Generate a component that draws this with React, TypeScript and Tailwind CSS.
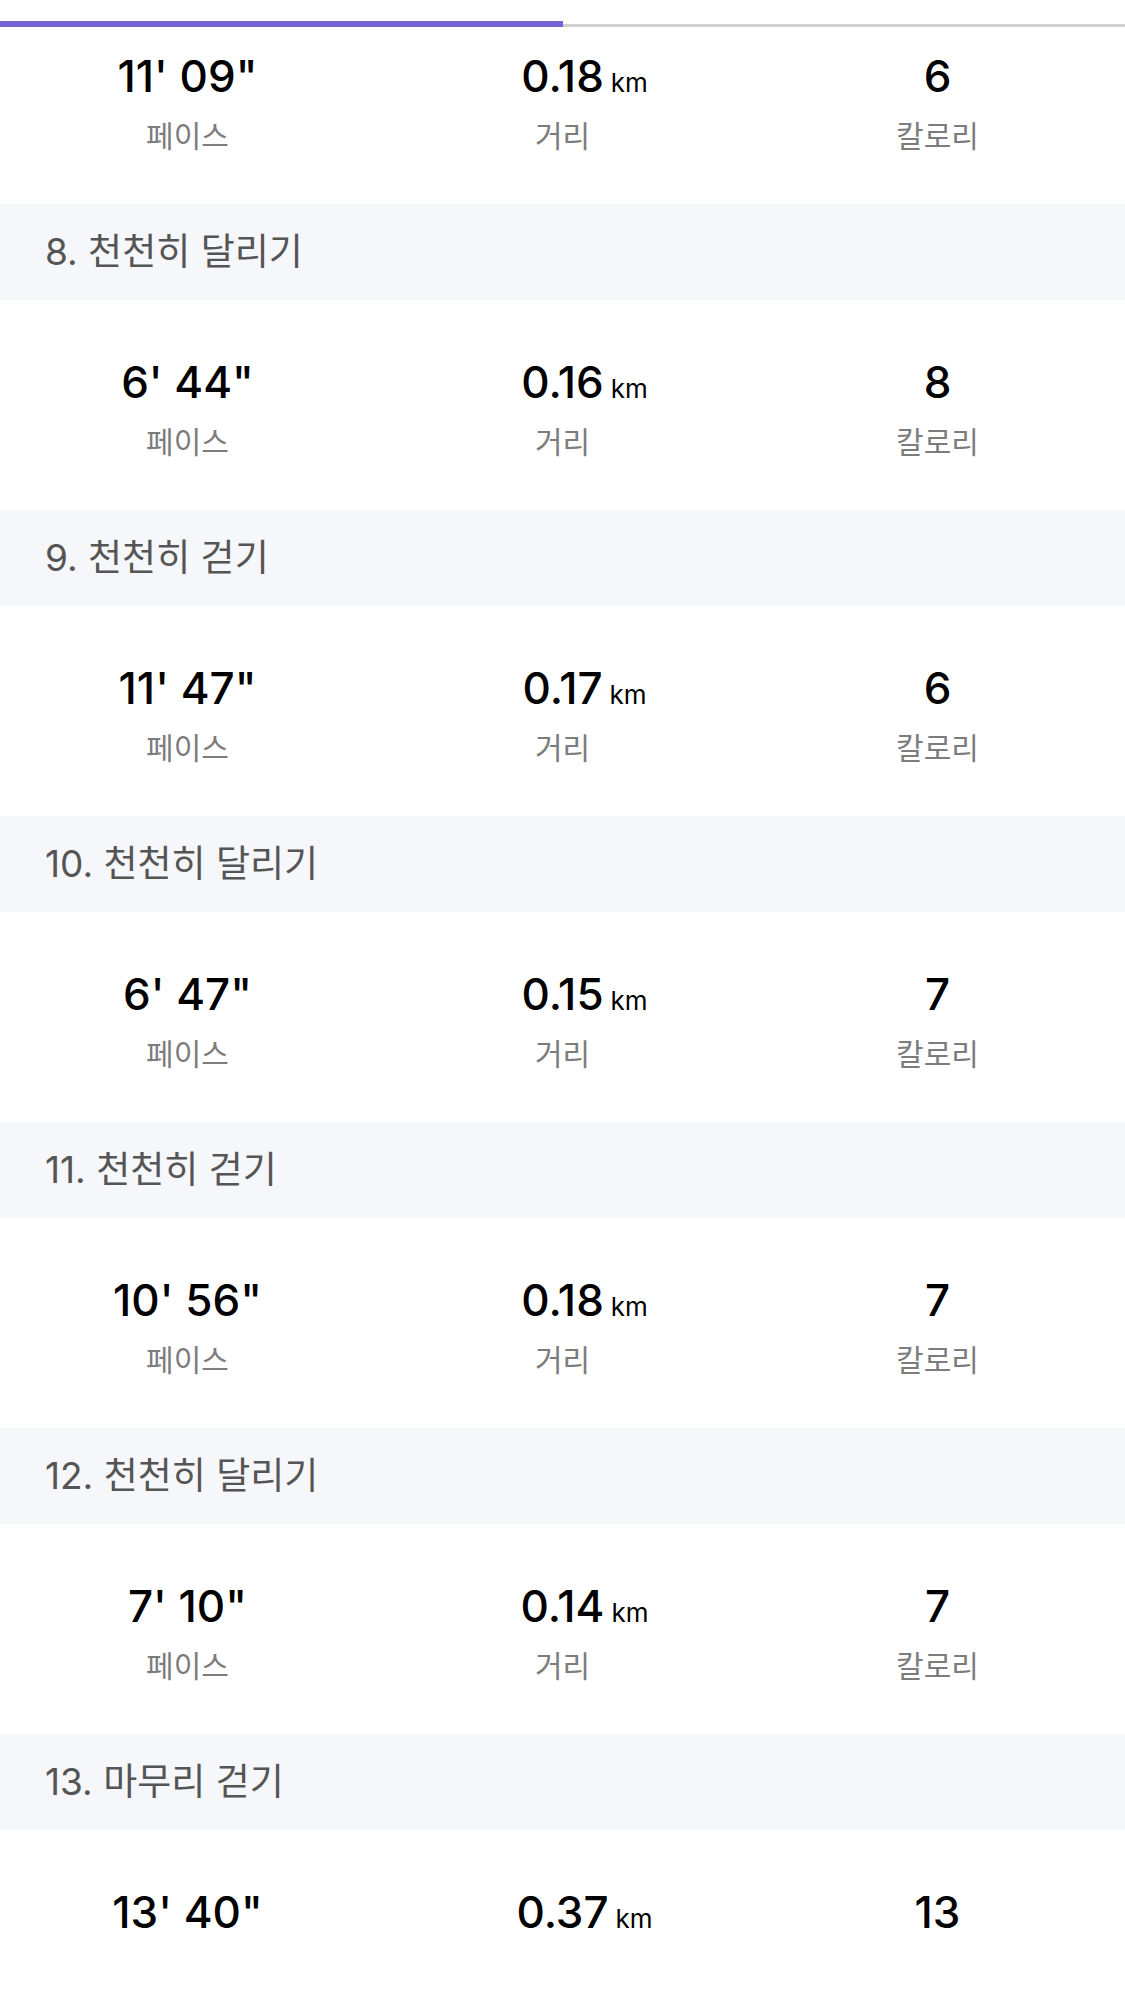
const sections = [
  { title: '8. 천천히 달리기', pace: `6' 44"`, dist: '0.16', cal: '8' },
  { title: '9. 천천히 걷기', pace: `11' 47"`, dist: '0.17', cal: '6' },
  { title: '10. 천천히 달리기', pace: `6' 47"`, dist: '0.15', cal: '7' },
  { title: '11. 천천히 걷기', pace: `10' 56"`, dist: '0.18', cal: '7' },
  { title: '12. 천천히 달리기', pace: `7' 10"`, dist: '0.14', cal: '7' },
  { title: '13. 마무리 걷기', pace: `13' 40"`, dist: '0.37', cal: '13', noLabels: true },
];

const fontStack = "font-['Inter','Noto_Sans_CJK_KR',sans-serif]";

const Stat = ({ value, unit, label }: { value: string; unit?: string; label?: string }) => (
  <div className="flex flex-col items-center">
    <div className="grid grid-cols-[1fr_auto_1fr] items-baseline w-full h-[53px]">
      <span />
      <span className="text-[44px] leading-[53px] font-medium text-black">{value}</span>
      <span className="text-[26px] leading-none text-black ml-[7px]">{unit}</span>
    </div>
    {label && <span className="mt-[15px] text-[30px] leading-[36px] text-[#7c7c7c]">{label}</span>}
  </div>
);

const StatsRow = ({ pace, dist, cal, noLabels, className }: { pace: string; dist: string; cal: string; noLabels?: boolean; className: string }) => (
  <div className={`grid grid-cols-3 bg-white ${className}`}>
    <Stat value={pace} label={noLabels ? undefined : '페이스'} />
    <Stat value={dist} unit="km" label={noLabels ? undefined : '거리'} />
    <Stat value={cal} label={noLabels ? undefined : '칼로리'} />
  </div>
);

export default function App() {
  return (
    <div className={`w-[1125px] h-[2004px] overflow-hidden bg-white ${fontStack}`}>
      <div className="h-[27px] flex items-end">
        <div className="w-1/2 h-[6px] bg-[#7464d4]" />
        <div className="flex-1 h-[3px] bg-[#d0d0d0]" />
      </div>

      <StatsRow pace={`11' 09"`} dist="0.18" cal="6" className="h-[177px] pt-[23px]" />

      {sections.map((s) => (
        <div key={s.title}>
          <div className="h-[96px] bg-[#f6f7fa] flex items-center pl-[45px]">
            <span className="text-[37px] text-[#555555]">{s.title}</span>
          </div>
          <StatsRow pace={s.pace} dist={s.dist} cal={s.cal} noLabels={s.noLabels} className="h-[210px] pt-[56px]" />
        </div>
      ))}
    </div>
  );
}
